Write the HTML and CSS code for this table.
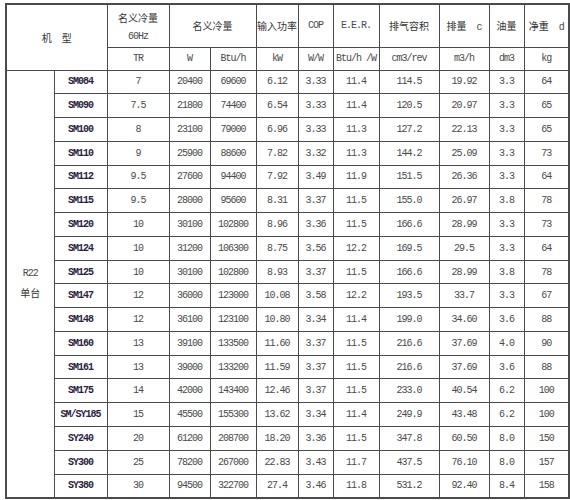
FILE: index.html
```html
<!DOCTYPE html>
<html lang="zh">
<head>
<meta charset="utf-8">
<link rel="stylesheet" href="styles.css">
</head>
<body>
<table class="spec">
  <colgroup>
    <col class="c1"><col class="c2"><col class="c3"><col class="c4"><col class="c5"><col class="c6">
    <col class="c7"><col class="c8"><col class="c9"><col class="c10"><col class="c11"><col class="c12">
  </colgroup>
  <thead>
    <tr class="h1">
      <th colspan="2" rowspan="2" class="zh">机　型</th>
      <th class="zh two"><span class="l1">名义冷量</span><span class="l2 num">60Hz</span></th>
      <th colspan="2" class="zh">名义冷量</th>
      <th class="zh">输入功率</th>
      <th class="num">COP</th>
      <th class="num">E.E.R.</th>
      <th class="zh">排气容积</th>
      <th class="zh">排量　<span class="num">c</span></th>
      <th class="zh">油量</th>
      <th class="zh">净重　<span class="num">d</span></th>
    </tr>
    <tr class="h2">
      <th class="num">TR</th>
      <th class="num">W</th>
      <th class="num">Btu/h</th>
      <th class="num">kW</th>
      <th class="num">W/W</th>
      <th class="num">Btu/h /W</th>
      <th class="num">cm3/rev</th>
      <th class="num">m3/h</th>
      <th class="num">dm3</th>
      <th class="num">kg</th>
    </tr>
  </thead>
  <tbody>
    <tr><td rowspan="18" class="group"><span class="num">R22</span><span class="zh">单台</span></td><td class="model">SM084</td><td>7</td><td>20400</td><td>69600</td><td>6.12</td><td>3.33</td><td>11.4</td><td>114.5</td><td>19.92</td><td>3.3</td><td>64</td></tr>
    <tr><td class="model">SM090</td><td>7.5</td><td>21800</td><td>74400</td><td>6.54</td><td>3.33</td><td>11.4</td><td>120.5</td><td>20.97</td><td>3.3</td><td>65</td></tr>
    <tr><td class="model">SM100</td><td>8</td><td>23100</td><td>79000</td><td>6.96</td><td>3.33</td><td>11.3</td><td>127.2</td><td>22.13</td><td>3.3</td><td>65</td></tr>
    <tr><td class="model">SM110</td><td>9</td><td>25900</td><td>88600</td><td>7.82</td><td>3.32</td><td>11.3</td><td>144.2</td><td>25.09</td><td>3.3</td><td>73</td></tr>
    <tr><td class="model">SM112</td><td>9.5</td><td>27600</td><td>94400</td><td>7.92</td><td>3.49</td><td>11.9</td><td>151.5</td><td>26.36</td><td>3.3</td><td>64</td></tr>
    <tr><td class="model">SM115</td><td>9.5</td><td>28000</td><td>95600</td><td>8.31</td><td>3.37</td><td>11.5</td><td>155.0</td><td>26.97</td><td>3.8</td><td>78</td></tr>
    <tr><td class="model">SM120</td><td>10</td><td>30100</td><td>102800</td><td>8.96</td><td>3.36</td><td>11.5</td><td>166.6</td><td>28.99</td><td>3.3</td><td>73</td></tr>
    <tr><td class="model">SM124</td><td>10</td><td>31200</td><td>106300</td><td>8.75</td><td>3.56</td><td>12.2</td><td>169.5</td><td>29.5</td><td>3.3</td><td>64</td></tr>
    <tr><td class="model">SM125</td><td>10</td><td>30100</td><td>102800</td><td>8.93</td><td>3.37</td><td>11.5</td><td>166.6</td><td>28.99</td><td>3.8</td><td>78</td></tr>
    <tr><td class="model">SM147</td><td>12</td><td>36000</td><td>123000</td><td>10.08</td><td>3.58</td><td>12.2</td><td>193.5</td><td>33.7</td><td>3.3</td><td>67</td></tr>
    <tr><td class="model">SM148</td><td>12</td><td>36100</td><td>123100</td><td>10.80</td><td>3.34</td><td>11.4</td><td>199.0</td><td>34.60</td><td>3.6</td><td>88</td></tr>
    <tr><td class="model">SM160</td><td>13</td><td>39100</td><td>133500</td><td>11.60</td><td>3.37</td><td>11.5</td><td>216.6</td><td>37.69</td><td>4.0</td><td>90</td></tr>
    <tr><td class="model">SM161</td><td>13</td><td>39000</td><td>133200</td><td>11.59</td><td>3.37</td><td>11.5</td><td>216.6</td><td>37.69</td><td>3.6</td><td>88</td></tr>
    <tr><td class="model">SM175</td><td>14</td><td>42000</td><td>143400</td><td>12.46</td><td>3.37</td><td>11.5</td><td>233.0</td><td>40.54</td><td>6.2</td><td>100</td></tr>
    <tr><td class="model">SM/SY185</td><td>15</td><td>45500</td><td>155300</td><td>13.62</td><td>3.34</td><td>11.4</td><td>249.9</td><td>43.48</td><td>6.2</td><td>100</td></tr>
    <tr><td class="model">SY240</td><td>20</td><td>61200</td><td>208700</td><td>18.20</td><td>3.36</td><td>11.5</td><td>347.8</td><td>60.50</td><td>8.0</td><td>150</td></tr>
    <tr><td class="model">SY300</td><td>25</td><td>78200</td><td>267000</td><td>22.83</td><td>3.43</td><td>11.7</td><td>437.5</td><td>76.10</td><td>8.0</td><td>157</td></tr>
    <tr><td class="model">SY380</td><td>30</td><td>94500</td><td>322700</td><td>27.4</td><td>3.46</td><td>11.8</td><td>531.2</td><td>92.40</td><td>8.4</td><td>158</td></tr>
  </tbody>
</table>
</body>
</html>
```
FILE: styles.css
```css
html, body {
  margin: 0;
  padding: 0;
  background: #ffffff;
}

.spec {
  margin: 3px 0 0 5px;
  border-collapse: collapse;
  table-layout: fixed;
  width: 563px;
  border: 2px solid #4a4a4a;
  color: #4a4a4a;
  font-family: "Liberation Mono", "DejaVu Sans Mono", monospace;
  font-size: 10px;
  letter-spacing: -1px;
}

.c1 { width: 48px; }
.c2 { width: 53px; }
.c3 { width: 62px; }
.c4 { width: 41px; }
.c5 { width: 46px; }
.c6 { width: 42px; }
.c7 { width: 35px; }
.c8 { width: 46px; }
.c9 { width: 60px; }
.c10 { width: 50px; }
.c11 { width: 35px; }
.c12 { width: 45px; }

.spec th,
.spec td {
  border: 1px solid #4a4a4a;
  padding: 0;
  text-align: center;
  vertical-align: middle;
  font-weight: normal;
  white-space: nowrap;
  overflow: hidden;
}

.spec .h1 { height: 43px; }
.spec .h2 { height: 23px; }
.spec tbody tr { height: 23.78px; }

.zh {
  font-family: "Noto Sans CJK SC", "Noto Sans", sans-serif;
  font-size: 10px;
  letter-spacing: 0;
  color: #333333;
}

.num {
  font-family: "Liberation Mono", "DejaVu Sans Mono", monospace;
  font-size: 10px;
  letter-spacing: -1px;
  color: #4a4a4a;
}

.two .l1,
.two .l2 {
  display: block;
}

.two .l1 { margin-bottom: 6px; }

.spec td.model {
  font-weight: bold;
  color: #2c1d40;
}

.spec td.group {
  display: table-cell;
}

.group span {
  display: block;
}

.group .num { margin-bottom: 6px; }
```
